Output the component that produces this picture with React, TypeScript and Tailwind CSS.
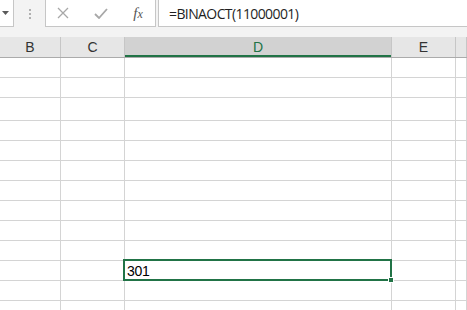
import React from "react";

const COLS = [
  { label: "B", w: "w-[61px]" },
  { label: "C", w: "w-[64px]" },
  { label: "D", w: "w-[267px]" },
  { label: "E", w: "w-[64px]" },
  { label: "", w: "flex-1" },
];

// heights include the bottom gridline
const ROWS = ["h-[20px]", "h-[20px]", "h-[23px]", "h-[20px]", "h-[20px]", "h-[20px]", "h-[20px]", "h-[20px]", "h-[20px]", "h-[20px]", "h-[20px]", "h-[20px]", "h-[20px]"];
const ACTIVE_ROW = 10;

const FormulaBar = () => (
  <div className="h-[37px] bg-[#f3f3f3] flex items-start">
    <div className="w-[14px] h-[28px] -mt-px bg-white border border-l-0 border-[#c6c6c6] flex items-center pl-[1px]">
      <svg width="9" height="5" viewBox="0 0 9 5">
        <path d="M1 0 L8 0 L4.5 4 Z" fill="#5a5a5a" />
      </svg>
    </div>
    <div className="w-[31px] h-[28px] flex flex-col items-center justify-center gap-[2px]">
      <span className="w-[2px] h-[2px] bg-[#b0b0b0]" />
      <span className="w-[2px] h-[2px] bg-[#b0b0b0]" />
      <span className="w-[2px] h-[2px] bg-[#b0b0b0]" />
    </div>
    <div className="w-[111px] h-[28px] -mt-px bg-white border border-[#c6c6c6] flex items-center">
      <div className="w-[36px] flex justify-center pr-[2px]">
        <svg width="12" height="12" viewBox="0 0 12 12">
          <path d="M1 1 L11 11 M11 1 L1 11" stroke="#a8a8a8" strokeWidth="1.3" />
        </svg>
      </div>
      <div className="w-[36px] flex justify-center pl-[2px]">
        <svg width="14" height="11" viewBox="0 0 14 11">
          <path d="M1 6 L5 10 L13 1" stroke="#a8a8a8" strokeWidth="1.8" fill="none" />
        </svg>
      </div>
      <div className="flex-1 flex justify-center pl-[3px]">
        <span className="text-[15px] leading-none text-[#555] italic font-['Liberation_Serif',serif]">
          f<span className="text-[12px]">x</span>
        </span>
      </div>
    </div>
    <div className="ml-[2px] flex-1 h-[28px] -mt-px bg-white border border-r-0 border-[#c6c6c6] flex items-center pl-[10px]">
      <span className="text-[14px] text-[#1f1f1f] font-['Open_Sans',sans-serif] tracking-[-0.6px]">=BINAOCT(11000001)</span>
    </div>
  </div>
);

const HeaderRow = () => (
  <div className="flex h-[21px] bg-[#e6e6e6] border-b border-[#ababab]">
    {COLS.map((c, i) => {
      const sel = c.label === "D";
      return (
        <div
          key={i}
          className={`${c.w} h-full flex items-center justify-center border-r border-[#c6c6c6] text-[14px] font-['Liberation_Sans',sans-serif] ${
            sel ? "bg-[#d2d2d2] text-[#217346] shadow-[inset_0_-2px_0_#217346]" : "text-[#333]"
          }`}
        >
          {c.label}
        </div>
      );
    })}
  </div>
);

export default function App() {
  return (
    <div className="w-[467px] h-[310px] overflow-hidden bg-white select-none">
      <FormulaBar />
      <HeaderRow />
      {ROWS.map((h, r) => (
        <div key={r} className={`flex ${h}`}>
          {COLS.map((c, i) => (
            <div key={i} className={`${c.w} h-full border-r border-b border-[#d4d4d4] relative`}>
              {r === ACTIVE_ROW && c.label === "D" && (
                <>
                  <div className="absolute -top-[2px] -left-[2px] -right-[1px] -bottom-[1px] border-2 border-[#217346] z-10" />
                  <div className="absolute -right-[3px] -bottom-[3px] w-[6px] h-[6px] bg-[#217346] border border-white z-20" />
                  <span className="absolute left-[2px] top-[1px] text-[14px] leading-[18px] text-black font-['Liberation_Sans',sans-serif] tracking-[-0.3px]">301</span>
                </>
              )}
            </div>
          ))}
        </div>
      ))}
    </div>
  );
}
